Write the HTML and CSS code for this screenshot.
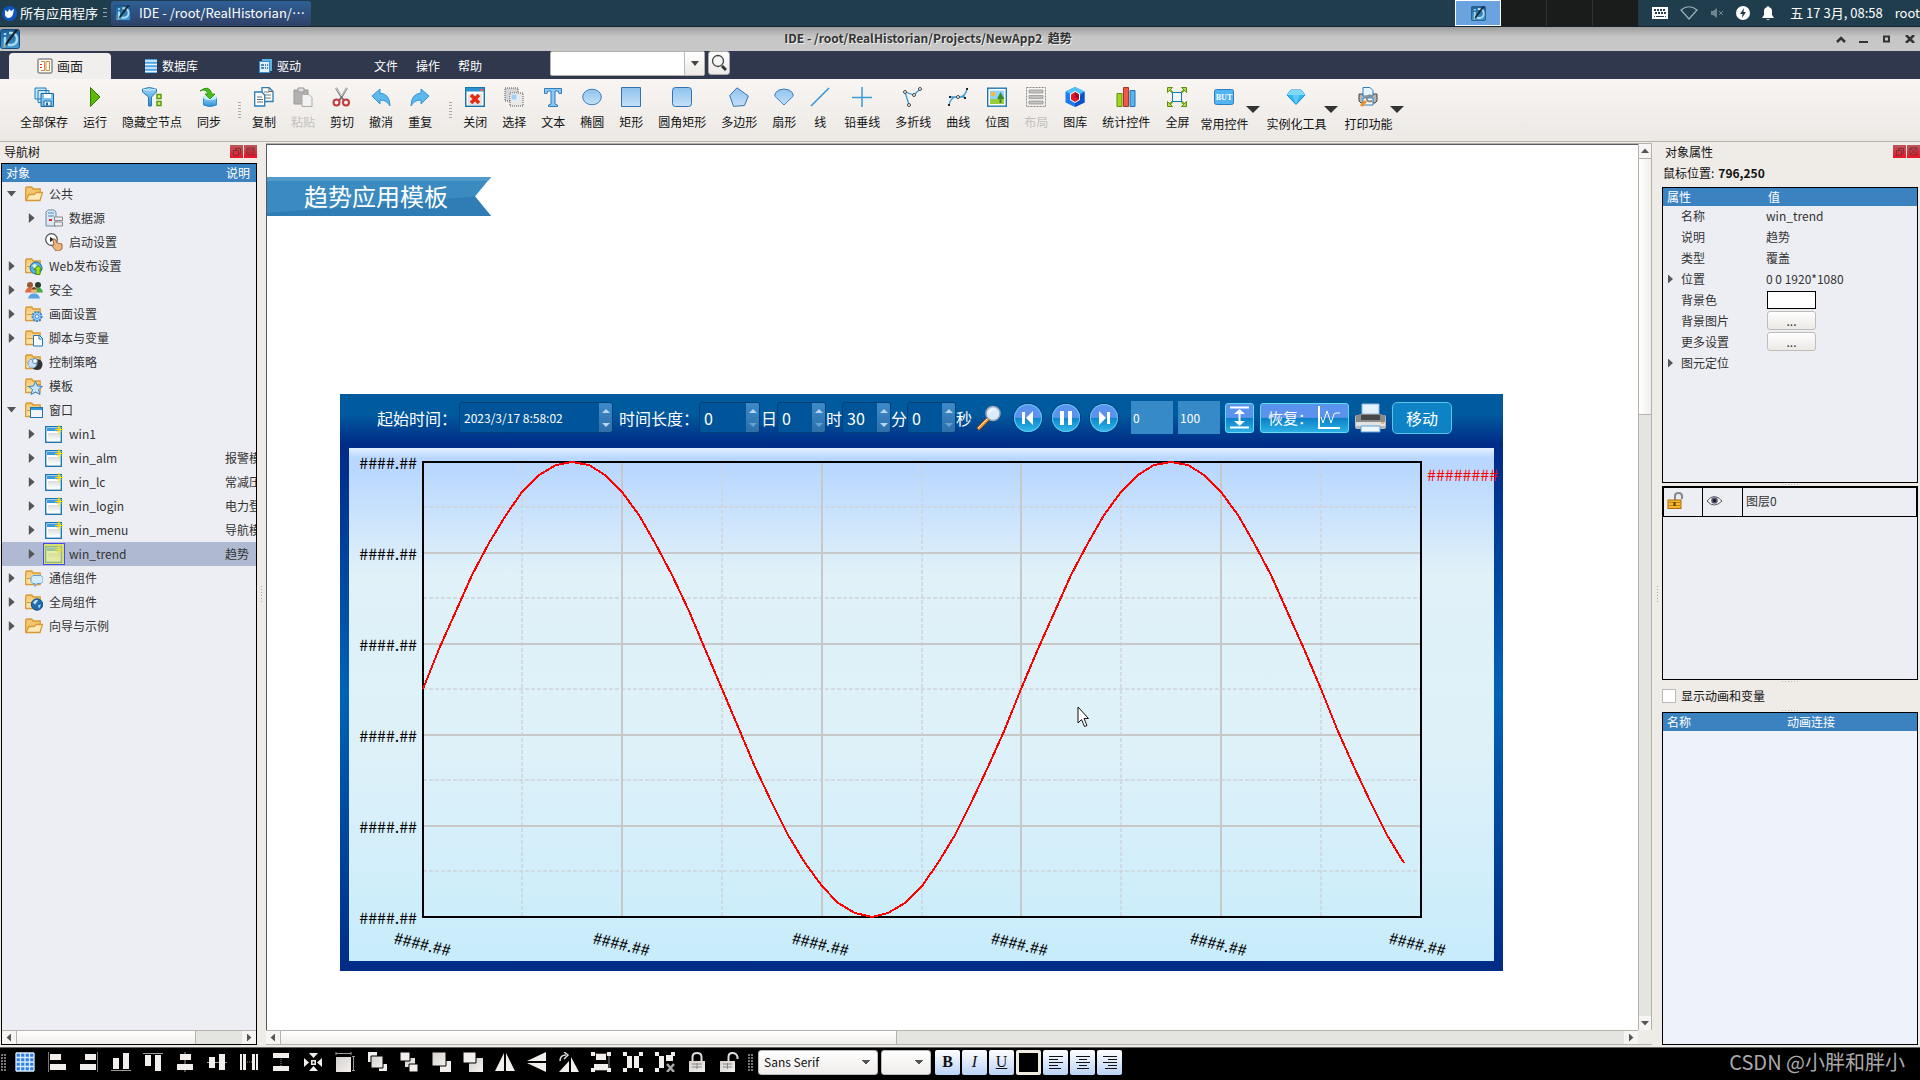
FILE: index.html
```html
<!DOCTYPE html>
<html lang="zh-CN">
<head>
  <meta charset="UTF-8" />
  <meta name="viewport" content="width=device-width, initial-scale=1" />
  <title>IDE - /root/RealHistorian/Projects/NewApp2 趋势</title>
  <link rel="stylesheet" href="styles.css">
</head>
<body>

  <!-- shared gradients and symbols -->
  <svg class="defs" width="0" height="0" aria-hidden="true">
    <defs>
      <linearGradient id="gBlue" x1="0" y1="0" x2="0" y2="1"><stop offset="0" stop-color="#8fc3ee"/><stop offset="1" stop-color="#c6e0f7"/></linearGradient>
      <linearGradient id="gSky" x1="0" y1="0" x2="0" y2="1"><stop offset="0" stop-color="#9bd8f8"/><stop offset="1" stop-color="#2b8bd6"/></linearGradient>
      <linearGradient id="gFolder" x1="0" y1="0" x2="0" y2="1"><stop offset="0" stop-color="#f3c66d"/><stop offset="1" stop-color="#fdeab4"/></linearGradient>
      <linearGradient id="gGrey" x1="0" y1="0" x2="1" y2="1"><stop offset="0" stop-color="#d2cfcc"/><stop offset="1" stop-color="#f4f1ee"/></linearGradient>
      <linearGradient id="gWin" x1="0" y1="0" x2="0" y2="1"><stop offset="0" stop-color="#dcdcdc"/><stop offset="1" stop-color="#fff"/></linearGradient>
      <linearGradient id="gApp" x1="0" y1="0" x2="0" y2="1"><stop offset="0" stop-color="#1c5d93"/><stop offset="1" stop-color="#3f9ad0"/></linearGradient>
    </defs>
    <symbol id="app" viewBox="0 0 20 20">
      <rect x=".5" y=".5" width="19" height="19" rx="2" fill="url(#gApp)" stroke="#164b7c"/>
      <path d="M5 4v2M5 8v8M9 4h3q5 1 5 6t-5 6H8" fill="none" stroke="#a8d8f4" stroke-width="2.5"/>
      <path d="M17.500 1L7 15l-2 2 1-3L15.500 1z" fill="#222" stroke="#111" stroke-width=".6"/>
      <path d="M5 15l-2 4 3-2z" fill="#e8c070"/>
    </symbol>
    <symbol id="folder" viewBox="0 0 18 17">
      <path d="M.7 15V2.500l1-1h5l1.500 2h7v11.500z" fill="url(#gFolder)" stroke="#d99a35" stroke-width="1.300"/>
      <path d="M2 9h8l2-2h4" fill="none" stroke="#d99a35"/>
    </symbol>
    <symbol id="folder-open" viewBox="0 0 18 17">
      <path d="M.7 15V2.500l1-1h5l1.500 2h7V7" fill="#f3c66d" stroke="#d99a35" stroke-width="1.300"/>
      <path d="M1 15l3-6h5l2-2h6.500l-2.500 8z" fill="#fdeab4" stroke="#d99a35" stroke-width="1.300"/>
    </symbol>
    <symbol id="win" viewBox="0 0 18 18">
      <rect x=".7" y="1.700" width="15.600" height="15.600" fill="#fff" stroke="#1c78b4" stroke-width="1.400"/>
      <path d="M2 3h13v3H2z" fill="#3f9be0"/><path d="M3 8h12v8H3z" fill="url(#gWin)"/>
      <path d="M14 0v9M10 4.500h8" stroke="#ffdf00" stroke-width="1.200"/>
      <path d="M11.500 2l5 5M16.500 2l-5 5" stroke="#ffdf00" stroke-width=".8"/>
    </symbol>
  </svg>

  <header class="taskbar">
    <button class="apps-btn">
      <svg width="15" height="15" viewBox="0 0 15 15"><circle cx="7.500" cy="7.500" r="7.500" fill="#0d55bd"/><path d="M3 4l3 2 1-3 2 2 3-2-1 5q-1 4-5 4-3-1-3-4z" fill="#fff"/></svg>
      所有应用程序
    </button>
    <span class="task-grip"></span>
    <button class="task"><svg width="16" height="16"><use href="#app"/></svg><span>IDE - /root/RealHistorian/…</span></button>
    <div class="pager"><span class="active"><svg width="15" height="15"><use href="#app"/></svg></span><span></span><span></span><span></span></div>
    <div class="tray">
      <svg width="16" height="12" viewBox="0 0 16 12"><rect width="16" height="12" fill="#fff"/><path d="M2 3h12M3 6h11" stroke="#1f3d4d" stroke-width="2" stroke-dasharray="2 1"/><path d="M2 9.500h1M4 9.500h8M13 9.500h1" stroke="#1f3d4d"/></svg>
      <svg width="18" height="14" viewBox="0 0 18 14"><path d="M1 4q8-6.500 16 0l-8 9z" fill="none" stroke="#9fb0b9" stroke-width="1.200"/></svg>
      <svg width="14" height="12" viewBox="0 0 14 12"><path d="M1 4h2l4-3v10L3 8H1z" fill="#70858f"/><path d="M9 4l4 4M13 4L9 8" stroke="#70858f"/></svg>
      <svg width="14" height="14" viewBox="0 0 14 14"><circle cx="7" cy="7" r="7" fill="#fff"/><path d="M8 2L4 8h2.500L6 12l4-6H7.500z" fill="#1f3d4d"/></svg>
      <svg width="12" height="14" viewBox="0 0 12 14"><path d="M0 12l2-3V5q0-3 3-4 1-2 2 0 3 1 3 4v4l2 3zM4 13h4l-2 1z" fill="#fff"/></svg>
      <span class="clock">五 17 3月, 08:58</span>
      <span class="user">root</span>
    </div>
  </header>

  <div class="titlebar">
    <svg width="20" height="20"><use href="#app"/></svg>
    <h1>IDE - /root/RealHistorian/Projects/NewApp2&nbsp; 趋势</h1>
    <div class="win-btns">
      <button aria-label="卷起"><svg width="10" height="8"><path d="M1 7l4-4 4 4" fill="none" stroke="#333" stroke-width="2.500"/></svg></button>
      <button aria-label="最小化"><svg width="10" height="8"><path d="M0 7h9" stroke="#333" stroke-width="2"/></svg></button>
      <button aria-label="最大化"><svg width="10" height="8"><path d="M2 1.500h5v5H2z" fill="none" stroke="#333" stroke-width="2"/></svg></button>
      <button aria-label="关闭"><svg width="10" height="8"><path d="M1 0l8 8M9 0L1 8" stroke="#333" stroke-width="2.500"/></svg></button>
    </div>
  </div>

  <nav class="menubar">
    <a href="#" class="tab active"><svg width="16" height="16" viewBox="0 0 16 16"><rect x="1" y="1" width="14" height="14" rx="1" fill="#fff" stroke="#555"/><path d="M4 3.500h3.500v9H4M9 3.500h3.500v9H9z" fill="#fff" stroke="#c98a3a"/><path d="M3 6h2v1H3zM3 9h2v1H3z" fill="#e22"/></svg>画面</a>
    <a href="#" class="tab"><svg width="14" height="14" viewBox="0 0 14 14"><path d="M1 0h12v14H1z" fill="#4aa3e0"/><path d="M1 2h12M1 5.500h12M1 9h12M1 12.500h12" stroke="#e6f5ff" stroke-width="1.500"/></svg>数据库</a>
    <a href="#" class="tab"><svg width="14" height="14" viewBox="0 0 14 14"><path d="M3 0h10v12H3z" fill="#5fb3ea"/><rect x=".5" y="2.500" width="10" height="11" fill="#dff1fd" stroke="#3b8fd0"/><path d="M2 6h3M6 6h1M8 6h1M2 9h3M6 9h1M8 9h1" stroke="#1c5fa0" stroke-width="1.500"/></svg>驱动</a>
    <div class="menus"><a href="#">文件</a><a href="#">操作</a><a href="#">帮助</a></div>
    <label class="combo"><input type="text" aria-label="搜索"><i class="caret"></i></label>
    <button class="search-btn" aria-label="查找"><svg width="16" height="18" viewBox="0 0 16 18"><circle cx="7" cy="7" r="5.500" fill="none" stroke="#444" stroke-width="1.300"/><path d="M11 12l4 4" stroke="#333" stroke-width="3"/></svg></button>
  </nav>

  <div class="toolbar">
    <button class="tool"><svg viewBox="0 0 20 20"><path d="M1 1h11v11H1zM4 3.500h11v12H4z" fill="#cfe8f8" stroke="#1f7cba"/><path d="M7 6.500h12.500v13H7z" fill="#7cc3ee" stroke="#1668a8"/><path d="M10 7h7v4h-7z" fill="#fff"/><path d="M10 14h7v5h-7z" fill="#e8f3fb" stroke="#1668a8"/><path d="M12 15.500h2v3h-2z" fill="#1668a8"/></svg>全部保存</button>
    <button class="tool"><svg viewBox="0 0 20 20"><path d="M5.500.5L15 10 5.500 19.500z" fill="#5cb80b" stroke="#2f7d06"/></svg>运行</button>
    <button class="tool"><svg viewBox="0 0 20 20"><path d="M.5 2q6.500-3 14 0v3L9.500 10v9h-3v-9L.5 5z" fill="url(#gSky)" stroke="#2a78b6"/><path d="M1 2q6.500 2.500 13 0" stroke="#d9f0ff" fill="none"/><path d="M15 7.500h4v4h-4zM15 14.500h4v4h-4z" fill="#d9f07a" stroke="#5a9a0a" stroke-width="1.500"/></svg>隐藏空节点</button>
    <button class="tool"><svg viewBox="0 0 20 20"><path d="M4.500 10v8q6.500 3 13 0v-8z" fill="url(#gSky)" stroke="#2a8bcf"/><ellipse cx="11" cy="10.500" rx="7" ry="2.500" fill="#c9ecfd"/><path d="M1 4q9-7 12 3h3l-5 5-5-5h3q-2-6-8-3z" fill="#48bf17" stroke="#268a0a" stroke-width=".8"/></svg>同步</button>
    <span class="grip"></span>
    <button class="tool"><svg viewBox="0 0 20 20"><path d="M8 .5h7l4 4v10H8z" fill="#fff" stroke="#2a7fb8" stroke-width="1.300"/><path d="M10 5h5M11 8h6M11 11h6" stroke="#777"/><path d="M.7 5h7l3 3v11h-10z" fill="#fff" stroke="#2a7fb8" stroke-width="1.300"/><path d="M3 10h5M3 12.500h6M3 15h6M15 .5v4h4" stroke="#666" fill="none"/></svg>复制</button>
    <button class="tool" disabled><svg viewBox="0 0 20 20"><path d="M1 3h14v14H1z" fill="#b3b0ad" stroke="#999"/><path d="M5 1h6v4H5z" fill="#ddd" stroke="#999"/><path d="M9 7.500h7l3 3v9H9z" fill="#f2f2f2" stroke="#aaa"/></svg>粘贴</button>
    <button class="tool"><svg viewBox="0 0 20 20"><path d="M4 1l8 13M15 1L7 14" stroke="#777" stroke-width="2"/><path d="M4 1l5.500 8M15 1L9.500 9" stroke="#eee" stroke-width=".8"/><circle cx="4.500" cy="15.500" r="3" fill="none" stroke="#c0393c" stroke-width="2"/><circle cx="14" cy="15.500" r="3" fill="none" stroke="#c0393c" stroke-width="2"/></svg>剪切</button>
    <button class="tool"><svg viewBox="0 0 20 20"><path d="M1 9l8-7v4q10 1 10 13-3-6-10-6v4z" fill="#5db8f0" stroke="#3a94d4"/></svg>撤消</button>
    <button class="tool"><svg viewBox="0 0 20 20"><path d="M19 9l-8-7v4Q1 7 1 19q3-6 10-6v4z" fill="#5db8f0" stroke="#3a94d4"/></svg>重复</button>
    <span class="grip"></span>
    <button class="tool"><svg viewBox="0 0 20 20"><rect x=".7" y=".7" width="18.600" height="18.600" fill="#fff" stroke="#1974ad" stroke-width="1.500"/><path d="M1 1h18v3.500H1z" fill="#2b92cf"/><path d="M15 2h3v2h-3z" fill="#f55"/><path d="M3 7h14v11H3z" fill="#e4e4e4"/><path d="M6 8l8 8M14 8l-8 8" stroke="#e52a10" stroke-width="3.500"/></svg>关闭</button>
    <button class="tool"><svg viewBox="0 0 20 20"><path d="M1 1h13v13H1z" fill="#d5d5d5" stroke="#555" stroke-dasharray="1 1"/><path d="M6 6h13v13H6z" fill="#e9e9e9" stroke="#555" stroke-dasharray="1 1"/><path d="M7 7h6v6H7z" fill="#9fd0f7" stroke="#eee"/></svg>选择</button>
    <button class="tool"><svg viewBox="0 0 20 20"><path d="M1.500 1.500h17v5H16l-1-2.500h-3V17l2.500 1v1.500h-9V18L8 17V4H5L4 6.500H1.500z" fill="#8cc6f2" stroke="#2f7fc0"/></svg>文本</button>
    <button class="tool"><svg viewBox="0 0 20 20"><ellipse cx="10" cy="10" rx="9.300" ry="7.800" fill="url(#gBlue)" stroke="#3d7fc0"/></svg>椭圆</button>
    <button class="tool"><svg viewBox="0 0 20 20"><path d="M.5.5h19v19H.5z" fill="url(#gBlue)" stroke="#3373b3"/></svg>矩形</button>
    <button class="tool"><svg viewBox="0 0 20 20"><rect x=".5" y=".5" width="19" height="19" rx="3" fill="url(#gBlue)" stroke="#3373b3"/></svg>圆角矩形</button>
    <button class="tool"><svg viewBox="0 0 20 20"><path d="M8 .8L19.300 9l-3.800 9.500-11 .8L.7 8.500z" fill="url(#gBlue)" stroke="#3373b3"/></svg>多边形</button>
    <button class="tool"><svg viewBox="0 0 20 20"><path d="M10 18L.7 9Q.7 5 5 3q5-2 10 0 4.300 2 4.300 6z" fill="url(#gBlue)" stroke="#3d7fc0"/></svg>扇形</button>
    <button class="tool narrow"><svg viewBox="0 0 20 20"><path d="M1 19L19 1" stroke="#2a8fd4" stroke-width="1.500"/></svg>线</button>
    <button class="tool"><svg viewBox="0 0 20 20"><path d="M10 0v20M0 10.500h20" stroke="#3a9bd8" stroke-width="1.500"/></svg>铅垂线</button>
    <button class="tool"><svg viewBox="0 0 20 20"><path d="M6 18L2 5l9 3 6-6" stroke="#3a9bd8" stroke-width="1.300" fill="none"/><g fill="#fff" stroke="#444"><circle cx="6" cy="18" r="1.500"/><circle cx="2" cy="5" r="1.500"/><circle cx="11" cy="8" r="1.500"/><circle cx="17" cy="2" r="1.500"/></g></svg>多折线</button>
    <button class="tool"><svg viewBox="0 0 20 20"><path d="M1 18q2-9 9-8t9-8M1 10h16" stroke="#3a9bd8" stroke-width="1.300" fill="none"/><path d="M0 17h2v2H0zM18 1h2v2h-2zM1 9h2v2H1zM16 10h2v2h-2z" fill="#222"/><circle cx="10" cy="10" r="1.500" fill="#fff" stroke="#444"/></svg>曲线</button>
    <button class="tool"><svg viewBox="0 0 20 20"><rect x=".7" y="1.200" width="18.600" height="18" fill="#fff" stroke="#1c78b4" stroke-width="1.400"/><path d="M3 3.500h14V13H3z" fill="#8fd3f8"/><path d="M3 12h14v5H3z" fill="#9ccb3c"/><circle cx="6" cy="7" r="2.300" fill="#ffb92e"/><path d="M13.500 5l4 7h-3v4h-2v-4h-2.500z" fill="#3d8a2a"/></svg>位图</button>
    <button class="tool" disabled><svg viewBox="0 0 20 20"><path d="M.5.500h19v19H.5z" fill="none" stroke="#888" stroke-dasharray="2 1"/><path d="M3 3h14v3H3zM3 8.500h14v3H3zM3 14h14v3H3z" fill="#c0c0c0" stroke="#999" stroke-width=".8"/></svg>布局</button>
    <button class="tool"><svg viewBox="0 0 20 20"><path d="M10 0l9.500 4.500v11L10 20 .5 15.500v-11z" fill="#1d7df0"/><path d="M10 0l9.500 4.500L10 9 .5 4.500z" fill="#55c3fb"/><path d="M10 20v-6l9.500-9.500v11z" fill="#0a50c8"/><path d="M10 4l5 3v6l-5 3-5-3V7z" fill="#fff"/><path d="M10 5l4 2.500v5L10 15l-4-2.500v-5z" fill="#e0182a"/><path d="M10 5v5l4 2.500v-5z" fill="#a80c1c"/></svg>图库</button>
    <button class="tool"><svg viewBox="0 0 20 20"><path d="M1 6.500h5v13H1z" fill="#a3d420" stroke="#5f9410"/><path d="M7.500.500h5v19h-5z" fill="#ee5a45" stroke="#b23324"/><path d="M14 3.500h5v16h-5z" fill="#55b6ee" stroke="#2275b0"/></svg>统计控件</button>
    <button class="tool"><svg viewBox="0 0 20 20"><path d="M2 2l16 16M18 2L2 18" stroke="#74a81c" stroke-width="2"/><g fill="#b8dc4c" stroke="#5d8f10"><path d="M.5.500h5l-5 5zM19.500.500h-5l5 5zM.5 19.500h5l-5-5zM19.500 19.500h-5l5-5z"/></g><path d="M5.500 5.500h9v9h-9z" fill="#eef8ff" stroke="#1c78b4"/></svg>全屏</button>
    <button class="tool drop"><span><svg viewBox="0 0 20 20"><rect x=".5" y="2.500" width="19" height="15" rx="2" fill="#52b4f2" stroke="#2a80c0"/><text x="10" y="13" class="but">BUT</text></svg>常用控件</span><i></i></button>
    <button class="tool drop"><span><svg viewBox="0 0 20 20"><path d="M5 3h10l4 5-9 9.500L1 8z" fill="#2fb4f2" stroke="#1c8fd0"/><path d="M5 3h10l4 5H1z" fill="#7ddcfa"/><path d="M6 8l4 9 4-9z" fill="#5cc9f7"/></svg>实例化工具</span><i></i></button>
    <button class="tool drop"><span><svg viewBox="0 0 20 20"><path d="M1 7h18v7l-2 2H3l-2-2z" fill="#b5b5b5" stroke="#444"/><path d="M5 .5h7l3 3V9H5z" fill="#e9f6ff" stroke="#2a7fc0"/><path d="M5 11h10v7H5z" fill="#fff" stroke="#2a7fc0"/><path d="M14 9.500a3 3 0 1 0 0 4" fill="none" stroke="#8a8a8a" stroke-width="2"/><path d="M3 19l5-5" stroke="#f09320" stroke-width="3"/></svg>打印功能</span><i></i></button>
  </div>

  <main class="workspace">

    <aside class="nav-pane">
      <div class="pane-title">导航树<span class="pane-btns"><button aria-label="浮动"><svg width="13" height="13"><path d="M3.500 5.500h5v5h-5zM5.500 5V3.500h5v5H9" fill="none" stroke="#7c3036"/></svg></button><button aria-label="关闭"><svg width="13" height="13"><path d="M3 3h7v7H3zM4 4l5 5M9 4l-5 5" fill="none" stroke="#7c3036"/></svg></button></span></div>
      <div class="tree-box">
        <table class="tree">
          <thead><tr><th>对象</th><th class="note">说明</th></tr></thead>
          <tbody>
            <tr><td><i class="open"></i><svg><use href="#folder-open"/></svg>公共</td><td></td></tr>
            <tr class="sub"><td><i></i><svg viewBox="0 0 18 18"><path d="M1 3l2-2h6l2 2v14H1z" fill="#dbe8f1" stroke="#6d8ca3"/><path d="M3 4h6M3 7h6" stroke="#3d8dc4"/><path d="M4 11h3" stroke="#d22" stroke-width="2"/><path d="M9.500 8h8v3.500h-8zM9.500 13h8v4h-8z" fill="#eee" stroke="#888"/></svg>数据源</td><td></td></tr>
            <tr class="sub"><td><i class="none"></i><svg viewBox="0 0 18 18"><circle cx="6.500" cy="6.500" r="5.800" fill="#fff" stroke="#555" stroke-width="1.300"/><path d="M5 4l4 2.500L5 9z" fill="#222"/><path d="M8 6l2 0 2 4 5 1v5l-3 2h-3l-4-5 2-1z" fill="#ecb681" stroke="#a86b3c"/></svg>启动设置</td><td></td></tr>
            <tr><td><i></i><svg viewBox="0 0 18 17"><use href="#folder"/><circle cx="11" cy="10.500" r="6" fill="#58aee6" stroke="#1f6fae"/><path d="M7 8q3-3 5 0l-2 3z" fill="#dff3d0"/><path d="M13 8l4 4h-2v5h-4v-5H9z" fill="#9be01c" stroke="#448d08"/></svg>Web发布设置</td><td></td></tr>
            <tr><td><i></i><svg viewBox="0 0 18 17"><circle cx="5" cy="3.500" r="3" fill="#9b5a33"/><circle cx="13" cy="3.500" r="3" fill="#2c3a2c"/><path d="M0 11q1-5 5-5t5 5z" fill="#e0683c"/><path d="M8 11q1-5 5-5t5 5z" fill="#48a84a"/><circle cx="9" cy="8.500" r="3" fill="#e8b67c"/><path d="M6 8q3-5 6 0z" fill="#6b4420"/><path d="M3 17q1-5 6-5t6 5z" fill="#58a3e4"/></svg>安全</td><td></td></tr>
            <tr><td><i></i><svg viewBox="0 0 18 17"><use href="#folder"/><circle cx="12" cy="11" r="4.500" fill="#9fd0f7" stroke="#3a86cc" stroke-width="2" stroke-dasharray="2 1"/><circle cx="12" cy="11" r="1.800" fill="#fff" stroke="#3a86cc"/></svg>画面设置</td><td></td></tr>
            <tr><td><i></i><svg viewBox="0 0 18 17"><use href="#folder"/><path d="M8.500 6h6l3 3v7.500h-9z" fill="#fff" stroke="#1f78b8"/><path d="M14 6v3.500h3.500" fill="none" stroke="#1f78b8"/></svg>脚本与变量</td><td></td></tr>
            <tr><td><i class="none"></i><svg viewBox="0 0 18 17"><use href="#folder"/><circle cx="12" cy="11" r="5.500" fill="#333"/><circle cx="7.500" cy="10" r="4.500" fill="#c8dff5" stroke="#4a87bc" stroke-dasharray="2 1"/><circle cx="10" cy="7.500" r="2.500" fill="#fff" stroke="#4a87bc"/></svg>控制策略</td><td></td></tr>
            <tr><td><i class="none"></i><svg viewBox="0 0 18 17"><use href="#folder"/><path d="M10.500 4l2 4.500 5 .5-4 3 1.500 5-4.500-2.500L6 17l1.500-5-4-3 5-.5z" fill="#c4e4fa" stroke="#2f82c4"/></svg>模板</td><td></td></tr>
            <tr><td><i class="open"></i><svg viewBox="0 0 18 17"><use href="#folder"/><rect x="5.500" y="6" width="12" height="10" fill="#f4f4f4" stroke="#1c78b4"/><path d="M6 7.500h11" stroke="#2e97dc" stroke-width="2"/></svg>窗口</td><td></td></tr>
            <tr class="sub"><td><i></i><svg><use href="#win"/></svg>win1</td><td></td></tr>
            <tr class="sub"><td><i></i><svg><use href="#win"/></svg>win_alm</td><td>报警模板</td></tr>
            <tr class="sub"><td><i></i><svg><use href="#win"/></svg>win_lc</td><td>常减压</td></tr>
            <tr class="sub"><td><i></i><svg><use href="#win"/></svg>win_login</td><td>电力登录</td></tr>
            <tr class="sub"><td><i></i><svg><use href="#win"/></svg>win_menu</td><td>导航模板</td></tr>
            <tr class="sub selected"><td><i></i><svg class="current"><use href="#win"/></svg>win_trend</td><td>趋势</td></tr>
            <tr><td><i></i><svg viewBox="0 0 18 17"><use href="#folder"/><path d="M8 6h8l2 2v4l-2 2h-4l-2 3v-3H8l-2-2V8z" fill="#d6ecfb" stroke="#5aa0d4"/></svg>通信组件</td><td></td></tr>
            <tr><td><i></i><svg viewBox="0 0 18 17"><use href="#folder"/><circle cx="12" cy="11" r="5.700" fill="#1e6db0" stroke="#134c80"/><path d="M8 9q3-4 5-2l-3 4zM13 12l3-1-2 4z" fill="#bfe4f7"/></svg>全局组件</td><td></td></tr>
            <tr><td><i></i><svg><use href="#folder-open"/></svg>向导与示例</td><td></td></tr>
          </tbody>
        </table>
        <div class="hscroll"><b class="arr left"></b><span class="thumb nav-thumb"></span><span class="track"></span><b class="arr right"></b></div>
      </div>
    </aside>
    <span class="splitter-v"></span>

    <section class="editor">
      <div class="canvas">
        <div class="banner"><svg width="224" height="39" viewBox="0 0 224 39" preserveAspectRatio="none"><path d="M0 0h224l-16 19.500L224 39H0z" fill="#3b8bc0"/><path d="M0 0h224l-3 4H0z" fill="#4f9bcb"/><path d="M208 19.500L224 39H0v-3z" fill="#2f7db4"/></svg><h2>趋势应用模板</h2></div>

        <div class="trend">
          <div class="trend-bar">
            <label for="startTime">起始时间：</label>
            <span class="spin date"><input id="startTime" type="text" value="2023/3/17 8:58:02"><i></i></span>
            <label for="days" class="len">时间长度：</label>
            <span class="spin days"><input id="days" type="text" value="0"><i class="floor"></i></span>
            <label for="days" class="unit">日</label>
            <span class="spin"><input id="hours" type="text" value="0"><i class="floor"></i></span>
            <label for="hours">时</label>
            <span class="spin"><input id="minutes" type="text" value="30"><i></i></span>
            <label for="minutes">分</label>
            <span class="spin"><input id="seconds" type="text" value="0"><i class="floor"></i></span>
            <label for="seconds">秒</label>
            <button class="query" aria-label="查询"><svg width="25" height="26" viewBox="0 0 25 26"><path d="M2 24l10-10" stroke="#8a3c06" stroke-width="4"/><path d="M2 24l10-10" stroke="#f9a23a" stroke-width="2.500"/><path d="M2 23l9-9" stroke="#fff0c0"/><circle cx="17" cy="8.500" r="7" fill="#dcebfa" stroke="#9aa7b5" stroke-width="1.500"/><path d="M12 9q2-6 8-5-5 1-8 5z" fill="#fff"/></svg></button>
            <button class="round" aria-label="上一页"><svg width="28" height="28"><path d="M8 8h3v12H8zM19 7v14l-7-7z" fill="#fff"/></svg></button>
            <button class="round" aria-label="暂停"><svg width="28" height="28"><path d="M8 7h4v14H8zM16 7h4v14h-4z" fill="#fff"/></svg></button>
            <button class="round" aria-label="下一页"><svg width="28" height="28"><path d="M17 8h3v12h-3zM9 7v14l7-7z" fill="#fff"/></svg></button>
            <input class="range first" type="text" value="0" aria-label="下限">
            <input class="range" type="text" value="100" aria-label="上限">
            <button class="glossy stretch" aria-label="拉伸"><svg width="25" height="25" viewBox="0 0 25 25"><path d="M3 2.500h19M3 22.500h19M12.500 5v15" stroke="#fff" stroke-width="2"/><path d="M7 9l5.500-5L18 9zM7 16l5.500 5 5.500-5z" fill="#fff"/></svg></button>
            <button class="glossy restore">恢复：<svg width="24" height="25" viewBox="0 0 24 25"><path d="M2 1v22h21" fill="none" stroke="#fff" stroke-width="2"/><path d="M4 12l2 6 4-12 4 12 3-9 2-1h4" fill="none" stroke="#fff"/></svg></button>
            <button aria-label="打印"><svg width="31" height="30" viewBox="0 0 31 30"><rect y="12" width="31" height="14" rx="2" fill="#b8b8b8"/><path d="M7 1h17v10H7z" fill="#e4f2ff" stroke="#8fb6dc"/><path d="M1 13l4-2h21l4 2v6H1z" fill="#8a8a8a"/><path d="M6 12h19v5H6z" fill="#484848"/><path d="M1 19h29v4H1z" fill="#e2e2e2"/><path d="M6 23h19v6H6z" fill="#eef7ff" stroke="#5aa0d8"/><path d="M26 20h3" stroke="#e58a1c"/></svg></button>
            <button class="move">移动</button>
          </div>
          <svg class="plot" id="plot" viewBox="0 0 1145 513"></svg>
        </div>

        <svg class="cursor" width="12" height="22" viewBox="0 0 12 22"><path d="M1 1v16l3.500-3.500 3 7 2.500-1-3-7h4.500z" fill="#fff" stroke="#111"/></svg>
      </div>
      <div class="vscroll"><b class="arr up"></b><span class="thumb page-thumb"></span><span class="track"></span><b class="arr down"></b></div>
      <div class="hscroll"><b class="arr left"></b><span class="thumb page-thumb"></span><span class="track"></span><b class="arr right"></b></div>
      <span class="corner"></span>
    </section>

    <span class="splitter-v"></span>
    <aside class="props-pane">
      <div class="pane-title">对象属性<span class="pane-btns"><button aria-label="浮动"><svg width="13" height="13"><path d="M3.500 5.500h5v5h-5zM5.500 5V3.500h5v5H9" fill="none" stroke="#7c3036"/></svg></button><button aria-label="关闭"><svg width="13" height="13"><path d="M3 3h7v7H3zM4 4l5 5M9 4l-5 5" fill="none" stroke="#7c3036"/></svg></button></span></div>
      <p class="mouse">鼠标位置:<b>796,250</b></p>
      <div class="box props">
        <table>
          <thead><tr><th>属性</th><th>值</th></tr></thead>
          <tbody>
            <tr><td>名称</td><td>win_trend</td></tr>
            <tr><td>说明</td><td>趋势</td></tr>
            <tr><td>类型</td><td>覆盖</td></tr>
            <tr><td class="exp">位置</td><td>0 0 1920*1080</td></tr>
            <tr><td>背景色</td><td><button class="swatch" aria-label="背景色"></button></td></tr>
            <tr><td>背景图片</td><td><button class="more">...</button></td></tr>
            <tr><td>更多设置</td><td><button class="more">...</button></td></tr>
            <tr><td class="exp">图元定位</td><td></td></tr>
          </tbody>
        </table>
      </div>
      <span class="splitter-h"></span>
      <div class="box layers">
        <div class="layer">
          <span><svg width="17" height="18" viewBox="0 0 17 18"><path d="M8 8V4q0-3 3.500-3T15 4v3" fill="none" stroke="#888" stroke-width="2"/><rect x="1" y="8" width="13" height="8.500" fill="#f7b82b" stroke="#a86b08"/><path d="M2 10.500h11M2 13.500h11" stroke="#c98512"/><path d="M6.500 10h2v4h-2z" fill="#5a3804"/></svg></span>
          <span><svg width="17" height="18" viewBox="0 0 17 18"><path d="M1 9q7-9 15 0-8 8-15 0z" fill="#fff" stroke="#555"/><circle cx="8.500" cy="8.500" r="3.300" fill="#5a5a78"/><circle cx="8.500" cy="8.500" r="1.500" fill="#111"/></svg></span>
          <span>图层0</span>
        </div>
      </div>
      <span class="splitter-h"></span>
      <label class="check"><input type="checkbox">显示动画和变量</label>
      <span class="splitter-h"></span>
      <div class="box links">
        <table><thead><tr><th>名称</th><th>动画连接</th></tr></thead></table>
      </div>
    </aside>
  </main>

  <footer class="align-bar">
    <span class="grip dark"></span>
    <div class="align-tools">
      <button aria-label="网格"><svg viewBox="0 0 20 20"><path d="M1 1h18v18H1z" fill="#2f7fe0"/><path d="M1 1v18M5.500 1v18M10 1v18M14.500 1v18M19 1v18M1 1h18M1 5.500h18M1 10h18M1 14.500h18M1 19h18" stroke="#d7ecff" stroke-width="1.300"/></svg></button>
      <button aria-label="左对齐"><svg viewBox="0 0 20 20"><path d="M1.500 0v20" stroke="#777"/><path d="M3 2h11v6H3zM3 12h16v6H3z"/></svg></button>
      <button aria-label="右对齐"><svg viewBox="0 0 20 20"><path d="M18.500 0v20" stroke="#777"/><path d="M6 2h11v6H6zM1 12h16v6H1z"/></svg></button>
      <button aria-label="下对齐"><svg viewBox="0 0 20 20"><path d="M0 18.500h20" stroke="#999"/><path d="M2 6h6v11H2zM12 1h6v16h-6z"/></svg></button>
      <button aria-label="上对齐"><svg viewBox="0 0 20 20"><path d="M0 1.500h20" stroke="#999"/><path d="M2 3h6v11H2zM12 3h6v16h-6z"/></svg></button>
      <button aria-label="垂直居中"><svg viewBox="0 0 20 20"><path d="M10 0v20" stroke="#999"/><path d="M5 2h11v6H5zM2 12h16v6H2z"/></svg></button>
      <button aria-label="水平居中"><svg viewBox="0 0 20 20"><path d="M0 10.500h20" stroke="#999"/><path d="M2 5h6v11H2zM12 2h6v16h-6z"/></svg></button>
      <button aria-label="水平等距"><svg viewBox="0 0 20 20"><path d="M6 10h8" stroke="#999" stroke-dasharray="1 1"/><path d="M1 2h2v16H1zM4 2h3v16H4zM13 2h3v16h-3zM17 2h2v16h-2z"/></svg></button>
      <button aria-label="垂直等距"><svg viewBox="0 0 20 20"><path d="M10 7v8" stroke="#999" stroke-dasharray="1 1"/><path d="M2 1h16v5H2zM2 14h16v5H2z"/></svg></button>
      <button aria-label="居中"><svg viewBox="0 0 20 20"><path d="M8 8h5v5H8zM6 1h9l-4.500 5zM6 19h9l-4.500-5zM1 6v9l5-4.500zM19 6v9l-5-4.500z"/><path d="M9.500 9.500h2v2h-2z" fill="#000"/></svg></button>
      <button aria-label="等大小"><svg viewBox="0 0 20 20"><path d="M1 1.500h15M18.500 4v15M1 0v3M16 0v3M17 4.500h3M17 18.500h3" stroke="#999"/><path d="M1 5h15v15H1z" class="dim"/></svg></button>
      <button aria-label="上移一层"><svg viewBox="0 0 20 20"><path d="M1 0h9v10H1zM12 12h8v7h-8z"/><path d="M4 4h12v12H4z" class="dim" stroke="#000"/></svg></button>
      <button aria-label="下移一层"><svg viewBox="0 0 20 20"><path d="M6 6h10v9H6z" class="dim"/><path d="M1 0h10v9H1zM10 12h9v8h-9z" stroke="#000"/></svg></button>
      <button aria-label="置顶"><svg viewBox="0 0 20 20"><path d="M9 9h11v11H9z"/><path d="M1 0h14v14H1z" class="dim" stroke="#000"/></svg></button>
      <button aria-label="置底"><svg viewBox="0 0 20 20"><path d="M6 6h14v14H6z" class="dim"/><path d="M0 0h13v11H0z" stroke="#000"/></svg></button>
      <button aria-label="水平翻转"><svg viewBox="0 0 20 20"><path d="M9 1v18H0zM11 1v18h9z"/></svg></button>
      <button aria-label="垂直翻转"><svg viewBox="0 0 20 20"><path d="M19 0v9H0zM19 20v-9H0z"/></svg></button>
      <button aria-label="旋转"><svg viewBox="0 0 20 20"><path d="M10 9v11H0zM12 5v15h8z"/><path d="M1 9q0-6 6-6M5 0l4 3-4 4" fill="none" stroke="#ddd" stroke-width="1.500"/></svg></button>
      <button aria-label="组合"><svg viewBox="0 0 20 20"><path d="M2 2h16v16H2" fill="none" stroke="#888"/><path d="M5 2h10v6H5zM3 12h14v6H3zM0 0h4v4H0zM16 0h4v4h-4zM0 16h4v4H0zM16 16h4v4h-4z"/></svg></button>
      <button aria-label="合并"><svg viewBox="0 0 20 20"><path d="M4 4h5v12H4zM11 4h5v12h-5zM0 0h4v4H0zM16 0h4v4h-4zM0 16h4v4H0zM16 16h4v4h-4z"/></svg></button>
      <button aria-label="取消组合"><svg viewBox="0 0 20 20"><path d="M4 4h5v12H4zM11 3h7v6h-7zM0 0h4v4H0zM16 0h4v4h-4zM0 16h4v4H0z"/><path d="M12 12l7 8M19 12l-7 8" stroke="#aaa" stroke-width="2.500"/></svg></button>
      <button aria-label="锁定"><svg viewBox="0 0 20 20"><path d="M5.500 9V5q0-4 4.500-4t4.500 4v4" fill="none" stroke="#ddd" stroke-width="2"/><path d="M2 9h16v11H2z" class="dim"/><path d="M5 12h10M5 15h10M10 11v6" stroke="#888"/></svg></button>
      <button aria-label="解锁"><svg viewBox="0 0 20 20"><path d="M9.500 9V5q0-4 4-4t5 4v2" fill="none" stroke="#ddd" stroke-width="2"/><path d="M1 9h15v11H1z" class="dim"/><path d="M4 12h9M4 15h9M8.500 11v6" stroke="#888"/></svg></button>
    </div>
    <span class="grip dark"></span>
    <select class="font" aria-label="字体"><option>Sans Serif</option></select>
    <select class="font size" aria-label="字号"><option></option></select>
    <div class="format">
      <button class="ser"><b>B</b></button>
      <button class="ser"><em>I</em></button>
      <button class="ser"><u>U</u></button>
      <button class="color" aria-label="颜色"></button>
      <button aria-label="文字左对齐"><svg viewBox="0 0 18 18"><path d="M2 3.500h14M2 6.500h9M2 9.500h14M2 12.500h9M2 15.500h12" stroke="#111"/></svg></button>
      <button aria-label="文字居中"><svg viewBox="0 0 18 18"><path d="M2 3.500h14M5 6.500h8M2 9.500h14M5 12.500h8M3 15.500h12" stroke="#111"/></svg></button>
      <button aria-label="文字右对齐"><svg viewBox="0 0 18 18"><path d="M2 3.500h14M7 6.500h9M2 9.500h14M7 12.500h9M4 15.500h12" stroke="#111"/></svg></button>
    </div>
    <span class="mark">CSDN @小胖和胖小</span>
  </footer>

  <script>
    const plot = document.getElementById('plot');
    const box = { x: 74, y: 14, w: 998, h: 455 };
    const N = 5;
    let out = '';

    // grid, dashed lines sit halfway between the solid ones
    for (let i = 0; i < N; i++) {
      const mx = Math.floor(box.x + (i + 0.5) * box.w / N);
      const my = Math.floor(box.y + (i + 0.5) * box.h / N);
      out += `<path class="minor" d="M${mx} ${box.y}V${box.y + box.h}M${box.x} ${my}H${box.x + box.w}"/>`;
    }
    for (let i = 1; i < N; i++) {
      const gx = Math.floor(box.x + i * box.w / N);
      const gy = Math.floor(box.y + i * box.h / N);
      out += `<path class="major" d="M${gx} ${box.y}V${box.y + box.h}M${box.x} ${gy}H${box.x + box.w}"/>`;
    }
    out += `<rect class="frame" x="${box.x}" y="${box.y}" width="${box.w}" height="${box.h}"/>`;

    // sample curve, one point each 10 degrees
    const pts = [];
    for (let i = 0; i < 60; i++) {
      const px = Math.floor(box.x + i * box.w / 60);
      const py = Math.floor(box.y + box.h / 2 - Math.sin(i * Math.PI / 18) * box.h / 2);
      pts.push(px + ',' + py);
    }
    out += `<polyline class="curve" points="${pts.join(' ')}"/>`;

    for (let i = 0; i <= N; i++) {
      const y = box.y + i * box.h / N + 7;
      const x = box.x + i * 199 - 2;
      out += `<text class="end" x="${box.x - 6}" y="${y}">####.##</text>`;
      out += `<text class="mid" transform="translate(${x} 502) rotate(13)">####.##</text>`;
    }
    out += `<text class="legend" x="1078" y="33">########</text>`;
    plot.innerHTML = out;
  </script>
</body>
</html>
```
FILE: styles.css
```css
* {
  box-sizing: border-box;
}

body {
  margin: 0;
  height: 100vh;
  display: flex;
  flex-direction: column;
  overflow: hidden;
  font: 12px/18px "Noto Sans CJK SC", sans-serif;
  color: #111;
  background: #efebe7;
}

button, input, select {
  font: inherit;
  color: inherit;
}

button {
  border: 0;
  padding: 0;
  background: none;
}

a {
  color: inherit;
  text-decoration: none;
}

svg {
  flex: none;
  display: block;
}

.defs {
  position: absolute;
}

/* desktop panel */
.taskbar {
  display: flex;
  align-items: center;
  height: 27px;
  background: #1f3d4d;
  border-bottom: 1px solid #14232b;
  color: #fff;
  font-size: 13px;
}

.apps-btn {
  display: flex;
  align-items: center;
  gap: 3px;
  padding-left: 2px;
}

.task-grip {
  width: 4px;
  height: 10px;
  margin: 0 4px 0 5px;
  background: repeating-linear-gradient(#8aa 0 1px, transparent 1px 4px);
}

.task {
  display: flex;
  align-items: center;
  gap: 8px;
  width: 200px;
  height: 25px;
  padding-left: 4px;
  border-radius: 3px;
  background: linear-gradient(#2f5f96, #2f4166);
  white-space: nowrap;
}

.pager {
  display: flex;
  height: 26px;
  margin-left: auto;
  background: #1a1c1c;
}

.pager span {
  width: 46px;
  border-right: 1px solid #26343c;
}

.pager .active {
  display: flex;
  align-items: center;
  justify-content: center;
  border: 1px solid #fff;
  background: #6aa3e0;
}

.tray {
  display: flex;
  align-items: center;
  gap: 12px;
  padding-left: 13px;
}

.tray .clock {
  margin-left: 4px;
}

.titlebar {
  display: flex;
  align-items: center;
  height: 24px;
  padding-bottom: 1px;
  background: linear-gradient(#9d9d9d, #c6c6c6 40%, #c8c8c8);
}

.titlebar h1 {
  flex: 1;
  margin: 0;
  text-align: center;
  font-size: 12px;
  line-height: 20px;
  padding-bottom: 2px;
  color: #333;
  text-shadow: 1px 1px 0 #eee;
}

.win-btns {
  display: flex;
  gap: 13px;
  padding-right: 5px;
}

/* menu row */
.menubar {
  display: flex;
  align-items: flex-end;
  height: 28px;
  padding-left: 9px;
  background: #2f384c;
  color: #fff;
}

.tab {
  display: flex;
  align-items: center;
  gap: 4px;
  height: 26px;
  padding: 0 28px;
  margin-right: 5px;
}

.tab.active {
  background: #f1efee;
  border-radius: 4px 4px 0 0;
  color: #222;
  font-size: 13px;
}

.menus {
  display: flex;
  gap: 18px;
  margin: 0 68px 0 40px;
  line-height: 26px;
}

.combo {
  display: flex;
  align-self: flex-start;
  width: 155px;
  height: 25px;
  background: #fff;
  border: 1px solid #b5b1ad;
  border-radius: 2px;
}

.combo input {
  flex: 1;
  min-width: 0;
  border: 0;
  background: none;
}

.caret {
  width: 20px;
  border-left: 1px solid #bbb;
  background: linear-gradient(#fff, #ece9e5);
  display: flex;
  align-items: center;
  justify-content: center;
}

.caret::after {
  content: "";
  border: 4px solid transparent;
  border-top: 5px solid #444;
  border-bottom: 0;
}

.search-btn {
  display: flex;
  align-items: center;
  justify-content: center;
  align-self: flex-start;
  width: 22px;
  height: 24px;
  margin-left: 3px;
  border: 1px solid #aaa;
  border-radius: 3px;
  background: linear-gradient(#fff, #ece9e5);
}

/* main toolbar */
.toolbar {
  display: flex;
  height: 63px;
  padding-left: 13px;
  background: linear-gradient(#f8f5f2, #ece9e5);
  border-bottom: 1px solid #b8b0ad;
}

.tool {
  display: flex;
  flex-direction: column;
  align-items: center;
  gap: 6px;
  padding: 8px 7px 0;
  margin-right: 1px;
  white-space: nowrap;
}

.tool.narrow {
  padding: 8px 6px 0;
}

.tool svg {
  width: 20px;
  height: 20px;
}

.tool:disabled {
  color: #c3c0bd;
}

.tool.drop {
  flex-direction: row;
  align-items: flex-start;
  gap: 0;
  padding: 8px 3px 0;
}

.tool.drop span {
  display: flex;
  flex-direction: column;
  align-items: center;
  gap: 8px;
}

.tool.drop i {
  margin: 19px -1px 0 -2px;
  border: 7px solid transparent;
  border-top-color: #333;
  border-bottom: 0;
}

.but {
  font: bold 8px "Liberation Serif", serif;
  fill: #fff;
  text-anchor: middle;
}

.grip {
  width: 3px;
  height: 18px;
  margin: 23px 4px 0 9px;
  background: repeating-linear-gradient(#aaa 0 1px, transparent 1px 3px);
}

.workspace {
  flex: 1;
  min-height: 0;
  display: grid;
  grid-template-columns: 257px 9px minmax(0, 1fr) 10px 258px;
}

.pane-title {
  display: flex;
  align-items: center;
  justify-content: space-between;
  height: 21px;
  padding: 0 0 2px 3px;
}

.nav-pane .pane-title {
  padding-left: 4px;
}

.pane-btns {
  display: flex;
  gap: 1px;
}

.pane-btns button {
  width: 13px;
  height: 13px;
  background: linear-gradient(#b85a5e, #f01024);
}

.splitter-v {
  align-self: center;
  justify-self: center;
  width: 1px;
  height: 18px;
  background: repeating-linear-gradient(#aaa 0 1px, transparent 1px 3px);
}

.splitter-h {
  width: 18px;
  height: 1px;
  margin: 1px auto;
  background: repeating-linear-gradient(90deg, #bbb 0 1px, transparent 1px 3px);
}

/* navigation tree */
.nav-pane {
  display: flex;
  flex-direction: column;
  padding-bottom: 2px;
}

.tree-box {
  flex: 1;
  display: flex;
  flex-direction: column;
  justify-content: space-between;
  margin-left: 1px;
  border: 1px solid #000;
  background: #edeef4;
}

table {
  width: 100%;
  border-collapse: collapse;
  table-layout: fixed;
}

th {
  height: 18px;
  padding: 0 0 0 4px;
  background: #3b82c1;
  color: #fff;
  font-weight: normal;
  text-align: left;
  line-height: 18px;
}

.tree th.note {
  width: 32px;
  padding-left: 2px;
}

.tree td {
  height: 24px;
  padding: 0;
  color: #333;
  white-space: nowrap;
  overflow: hidden;
}

.tree td:first-child {
  display: flex;
  align-items: center;
  padding-left: 5px;
}

.tree td:last-child {
  padding-left: 1px;
}

.tree .sub td:first-child {
  padding-left: 25px;
}

.tree svg {
  width: 18px;
  height: 18px;
  margin: 0 6px 0 9px;
}

.tree i {
  width: 9px;
  height: 10px;
  background: #555;
  clip-path: polygon(20% 0, 85% 50%, 20% 100%);
}

.tree i.open {
  clip-path: polygon(0 20%, 100% 20%, 50% 75%);
}

.tree i.none {
  background: none;
}

.tree .selected {
  background: #afbad2;
}

.tree .selected .current {
  outline: 1px solid #4848f0;
  outline-offset: 1px;
  background: #d8e070;
  box-shadow: 0 0 0 1px #d8e070;
}

.current use {
  opacity: 0.4;
}

/* scroll bars */
.hscroll, .vscroll {
  display: flex;
  background: #e4e4e0;
}

.hscroll {
  height: 14px;
  border-top: 1px solid #b5b1ad;
}

.vscroll {
  flex-direction: column;
  width: 14px;
  border-left: 1px solid #b5b1ad;
  border-right: 1px solid #b5b1ad;
}

.track {
  flex: 1;
}

.arr {
  display: flex;
  align-items: center;
  justify-content: center;
  flex: 0 0 14px;
  background: #f7f5f3;
}

.arr::after {
  content: "";
  width: 8px;
  height: 8px;
  background: #555;
}

.arr.left::after { clip-path: polygon(75% 0, 20% 50%, 75% 100%); }
.arr.right::after { clip-path: polygon(25% 0, 80% 50%, 25% 100%); }
.arr.up::after { clip-path: polygon(0 75%, 50% 20%, 100% 75%); }
.arr.down::after { clip-path: polygon(0 25%, 50% 80%, 100% 25%); }

.thumb {
  border: 0 solid #b5b1ad;
  background: linear-gradient(#fff, #f1eeeb);
}

.hscroll .thumb {
  border-width: 0 1px;
}

.vscroll .thumb {
  border-width: 1px 0;
}

.nav-thumb {
  flex: 0 0 71%;
}

.hscroll .page-thumb {
  flex: 0 0 45%;
}

.vscroll .page-thumb {
  flex: 0 0 29%;
  background: linear-gradient(90deg, #fff, #f1eeeb);
}

/* drawing canvas */
.editor {
  display: grid;
  grid-template: minmax(0, 1fr) 14px / minmax(0, 1fr) 14px;
  margin: 1px 0 2px;
  border: solid #b5b1ad;
  border-width: 1px 0;
}

.canvas {
  position: relative;
  overflow: hidden;
  background: #fff;
  border: solid #5a5a62;
  border-width: 1px 0 0 1px;
}

.corner {
  background: #efebe7;
}

.banner {
  position: absolute;
  left: -1px;
  top: 32px;
  width: 224px;
  height: 39px;
  border-left: 1px solid #d33;
}

.banner h2 {
  position: absolute;
  inset: 0 38px 0 37px;
  margin: 0;
  font-size: 24px;
  font-weight: normal;
  line-height: 38px;
  white-space: nowrap;
  color: #fff;
}

.cursor {
  position: absolute;
  left: 810px;
  top: 561px;
}

.trend {
  position: absolute;
  left: 73px;
  top: 249px;
  width: 1163px;
  padding: 0 9px 10px;
  background: linear-gradient(#005a9e, #005a9e 20px, #002c86 50px, #00308e 80px, #0063b4 300px, #002c86 100%);
  color: #fff;
  font-size: 16px;
}

.trend-bar {
  display: flex;
  align-items: center;
  height: 54px;
  padding: 0 0 7px 28px;
  white-space: nowrap;
}

.trend-bar .len {
  margin-left: 6px;
}

.trend-bar .unit {
  margin-left: 1px;
}

.spin {
  display: flex;
  width: 49px;
  height: 31px;
  border: 1px solid #003f78;
  border-radius: 3px;
  background: #00559a;
  overflow: hidden;
}

.spin.date {
  width: 154px;
  margin-left: 2px;
  font-size: 12px;
}

.spin.days {
  width: 61px;
}

.spin input {
  flex: 1;
  min-width: 0;
  padding: 0 0 0 4px;
  border: 0;
  background: none;
}

.spin i {
  width: 13px;
  background: linear-gradient(#3b8bc8, #2f6faa);
}

.spin i::before, .spin i::after {
  content: "";
  display: block;
  margin: 6px 3px 10px;
  border: 4px solid transparent;
  border-width: 0 4px 4px;
  border-bottom-color: #b4d6f0;
}

.spin i::after {
  margin: 0 3px;
  border-width: 4px 4px 0;
  border-top-color: #b4d6f0;
}

.spin i.floor::after {
  border-top-color: #62a3d4;
}

.query {
  margin: 0 13px 0 4px;
}

.round {
  width: 28px;
  height: 28px;
  margin-right: 10px;
  border-radius: 50%;
  background: linear-gradient(#5b92ee 48%, #0a86cc 50%, #35b8ea);
  box-shadow: inset 0 0 0 1px #5cc8f0, 0 0 0 1px #023a7a;
}

.range {
  width: 42px;
  height: 33px;
  margin-right: 5px;
  padding: 0 0 0 2px;
  border: 0;
  background: #368ac8;
  font-size: 12px;
}

.range.first {
  margin-left: 3px;
}

.glossy {
  display: flex;
  align-items: center;
  justify-content: center;
  height: 30px;
  margin-right: 6px;
  border: 1px solid #62dcf4;
  border-radius: 3px;
  background: linear-gradient(#5b92ee 48%, #0a7fc8 50%, #2bb0e4);
}

.stretch {
  width: 29px;
}

.restore {
  width: 89px;
  gap: 4px;
  font-size: 15px;
}

.move {
  width: 60px;
  height: 32px;
  margin-left: 6px;
  border: 1px solid #5ac4e8;
  border-radius: 5px;
  background: #0d83c6;
}

/* chart */
.plot {
  display: block;
  width: 100%;
  overflow: visible;
  background: linear-gradient(#e3f1ff, #b9d7ff 10px, #b9d7ff 20px, #e0f1f8 125px, #def1f9 300px, #c8ecfb);
  font-size: 16px;
}

.frame {
  fill: none;
  stroke: #000;
  stroke-width: 2;
}

.major {
  stroke: #c8c8c8;
  stroke-width: 2;
}

.minor {
  stroke: #cdd3d8;
  stroke-width: 2;
  stroke-dasharray: 4 2;
  opacity: 0.7;
}

.curve {
  fill: none;
  stroke: #f00;
  stroke-width: 2;
  shape-rendering: crispEdges;
}

.end { text-anchor: end; }
.mid { text-anchor: middle; }
.legend { fill: #f00; }

/* property pane */
.props-pane {
  display: flex;
  flex-direction: column;
  padding-bottom: 2px;
}

.mouse {
  margin: 1px 0 5px 1px;
}

.mouse b {
  margin-left: 4px;
}

.box {
  margin-right: 2px;
  border: 1px solid #000;
  background: #edeef4;
}

.props {
  flex: 295 1 0;
}

.layers {
  flex: 192 1 0;
}

.links {
  flex: 332 1 0;
  background: #edf2fb;
}

.props th:first-child {
  width: 103px;
}

.props th:last-child {
  padding-left: 2px;
}

.props td {
  height: 21px;
  padding: 0 0 2px;
  line-height: 18px;
  color: #333;
}

.props td:first-child {
  padding-left: 18px;
}

.props td.exp {
  padding-left: 5px;
}

.exp::before {
  content: "";
  display: inline-block;
  width: 5px;
  height: 9px;
  margin-right: 8px;
  background: #555;
  clip-path: polygon(0 0, 100% 50%, 0 100%);
}

.swatch, .more {
  display: block;
  width: 49px;
  height: 18px;
  margin-left: 1px;
}

.swatch {
  border: 1px solid #000;
  background: #fff;
}

.more {
  height: 19px;
  border: 1px solid #c0bcb8;
  border-radius: 3px;
  background: linear-gradient(#fff, #ece9e6);
}

.layer {
  display: grid;
  grid-template-columns: 38px 40px 1fr;
  height: 30px;
  border: 1px solid #000;
}

.layer span {
  padding: 4px 3px;
  color: #333;
}

.layer span + span {
  border-left: 1px solid #000;
}

.check {
  display: flex;
  align-items: center;
  gap: 5px;
  height: 26px;
}

.check input {
  appearance: none;
  width: 14px;
  height: 14px;
  margin: 0;
  border: 1px solid #bbb;
  background: #fff;
}

.links th:first-child {
  width: 120px;
}

/* bottom bar */
.align-bar {
  display: flex;
  align-items: center;
  height: 33px;
  padding-bottom: 4px;
  background: #000;
  border-top: 1px solid #666;
}

.grip.dark {
  width: 5px;
  height: 18px;
  margin: 0 1px;
  background: repeating-linear-gradient(#000 0 1px, transparent 1px 3px), linear-gradient(90deg, #777 2px, #000 2px 3px, #777 3px);
}

.align-tools {
  display: flex;
  gap: 12px;
  padding: 0 8px;
}

.align-tools svg {
  width: 20px;
  height: 20px;
  fill: #f1eeeb;
}

.align-tools .dim {
  fill: url(#gGrey);
}

.font {
  appearance: none;
  width: 120px;
  height: 25px;
  padding: 0 5px;
  margin: 0 3px 0 4px;
  border: 1px solid #bbb;
  border-radius: 3px;
  background: conic-gradient(from -45deg at 50% 100%, #555 90deg, transparent 0) right 6px center/10px 5px no-repeat, linear-gradient(#fff, #efecea);
}

.font.size {
  width: 50px;
  margin: 0 4px 0 0;
}

.format {
  display: flex;
  gap: 2px;
}

.format button {
  display: flex;
  align-items: center;
  justify-content: center;
  width: 25px;
  height: 25px;
  border-radius: 2px;
  background: linear-gradient(#fff, #b9d2f6);
}

.format .ser {
  font: 16px "Liberation Serif", serif;
}

.format .ser b {
  font-weight: bold;
}

.format .color {
  border: 3px solid #efebe0;
  background: #000;
}

.format svg {
  width: 18px;
  height: 18px;
}

.mark {
  margin: 0 15px 0 auto;
  color: #aaa;
  font-size: 20px;
}
```
